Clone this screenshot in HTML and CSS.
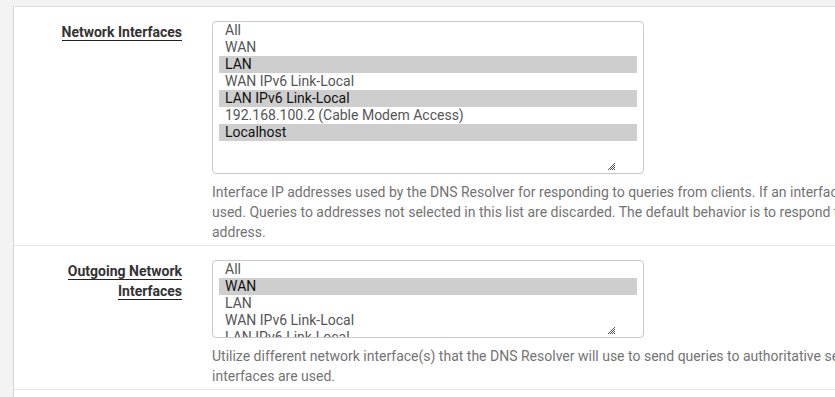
FILE: index.html
```html
<!DOCTYPE html>
<html>
<head>
	<meta charset="UTF-8">
	<title>DNS Resolver: General Settings</title>
	<link rel="stylesheet" href="styles.css">
</head>
<body>
<div class="panel">
	<div class="row">
		<div class="label"><span>Network Interfaces</span></div>
		<div class="field">
			<div class="listbox tall">
				<div class="option">All</div>
				<div class="option">WAN</div>
				<div class="option selected">LAN</div>
				<div class="option">WAN IPv6 Link-Local</div>
				<div class="option selected">LAN IPv6 Link-Local</div>
				<div class="option">192.168.100.2 (Cable Modem Access)</div>
				<div class="option selected">Localhost</div>
				<svg class="grip" width="7" height="7" viewBox="0 0 7 7"><path d="M7 0L0 7M7 2L2 7M7 4L4 7M7 6L6 7" stroke="#555" stroke-width="1"/></svg>
			</div>
			<div class="help narrow">
				Interface IP addresses used by the DNS Resolver for responding to queries from clients. If an interface has both IPv4 and IPv6 IPs, both are used. Queries to addresses not selected in this list are discarded. The default behavior is to respond to queries on every available IPv4 and IPv6 address.
			</div>
		</div>
	</div>
	<div class="row">
		<div class="label"><span>Outgoing Network Interfaces</span></div>
		<div class="field">
			<div class="listbox short">
				<div class="option">All</div>
				<div class="option selected">WAN</div>
				<div class="option">LAN</div>
				<div class="option">WAN IPv6 Link-Local</div>
				<div class="option">LAN IPv6 Link-Local</div>
				<div class="option">192.168.100.2 (Cable Modem Access)</div>
				<div class="option">Localhost</div>
				<svg class="grip" width="7" height="7" viewBox="0 0 7 7"><path d="M7 0L0 7M7 2L2 7M7 4L4 7M7 6L6 7" stroke="#555" stroke-width="1"/></svg>
			</div>
			<div class="help">
				Utilize different network interface(s) that the DNS Resolver will use to send queries to authoritative servers and receive their replies. By default all interfaces are used.
			</div>
		</div>
	</div>
</div>
</body>
</html>
```

FILE: styles.css
```css
body {
	margin: 0;
	background-color: #f3f3f3;
	font-family: Roboto, "Liberation Sans", sans-serif;
	font-size: 14px;
	line-height: 20px;
	color: #333;
	overflow: hidden;
	height: 397px;
}
.panel {
	margin: 6px 0 0 13px;
	border-top: 1px solid #dedede;
	border-left: 1px solid #d6d6d6;
	background-color: #FFF;
	width: 1300px;
	height: 400px;
}
.row {
	display: grid;
	grid-template-columns: 168px 905px;
	column-gap: 30px;
	padding: 14px 0 3px 0;
	border-bottom: 1px solid #e5e5e5;
}
.label {
	text-align: right;
	font-weight: bold;
	padding-top: 1px;
}
.label span {
	border-bottom: 1px solid #222;
}
.listbox {
	position: relative;
	box-sizing: border-box;
	width: 432px;
	padding: 0 6px;
	border: 1px solid #c9c9c9;
	border-radius: 4px;
	overflow: hidden;
	color: #555;
}
.listbox.tall {
	height: 153px;
}
.listbox.short {
	height: 78px;
}
.option {
	height: 17px;
	line-height: 17px;
	padding-left: 6px;
	white-space: nowrap;
}
.option.selected {
	background-color: #cecece;
	color: #111;
}
.grip {
	position: absolute;
	right: 28px;
	bottom: 3px;
}
.help {
	margin-top: 8px;
	color: #737373;
}
.help.narrow {
	width: 895px;
}
```
